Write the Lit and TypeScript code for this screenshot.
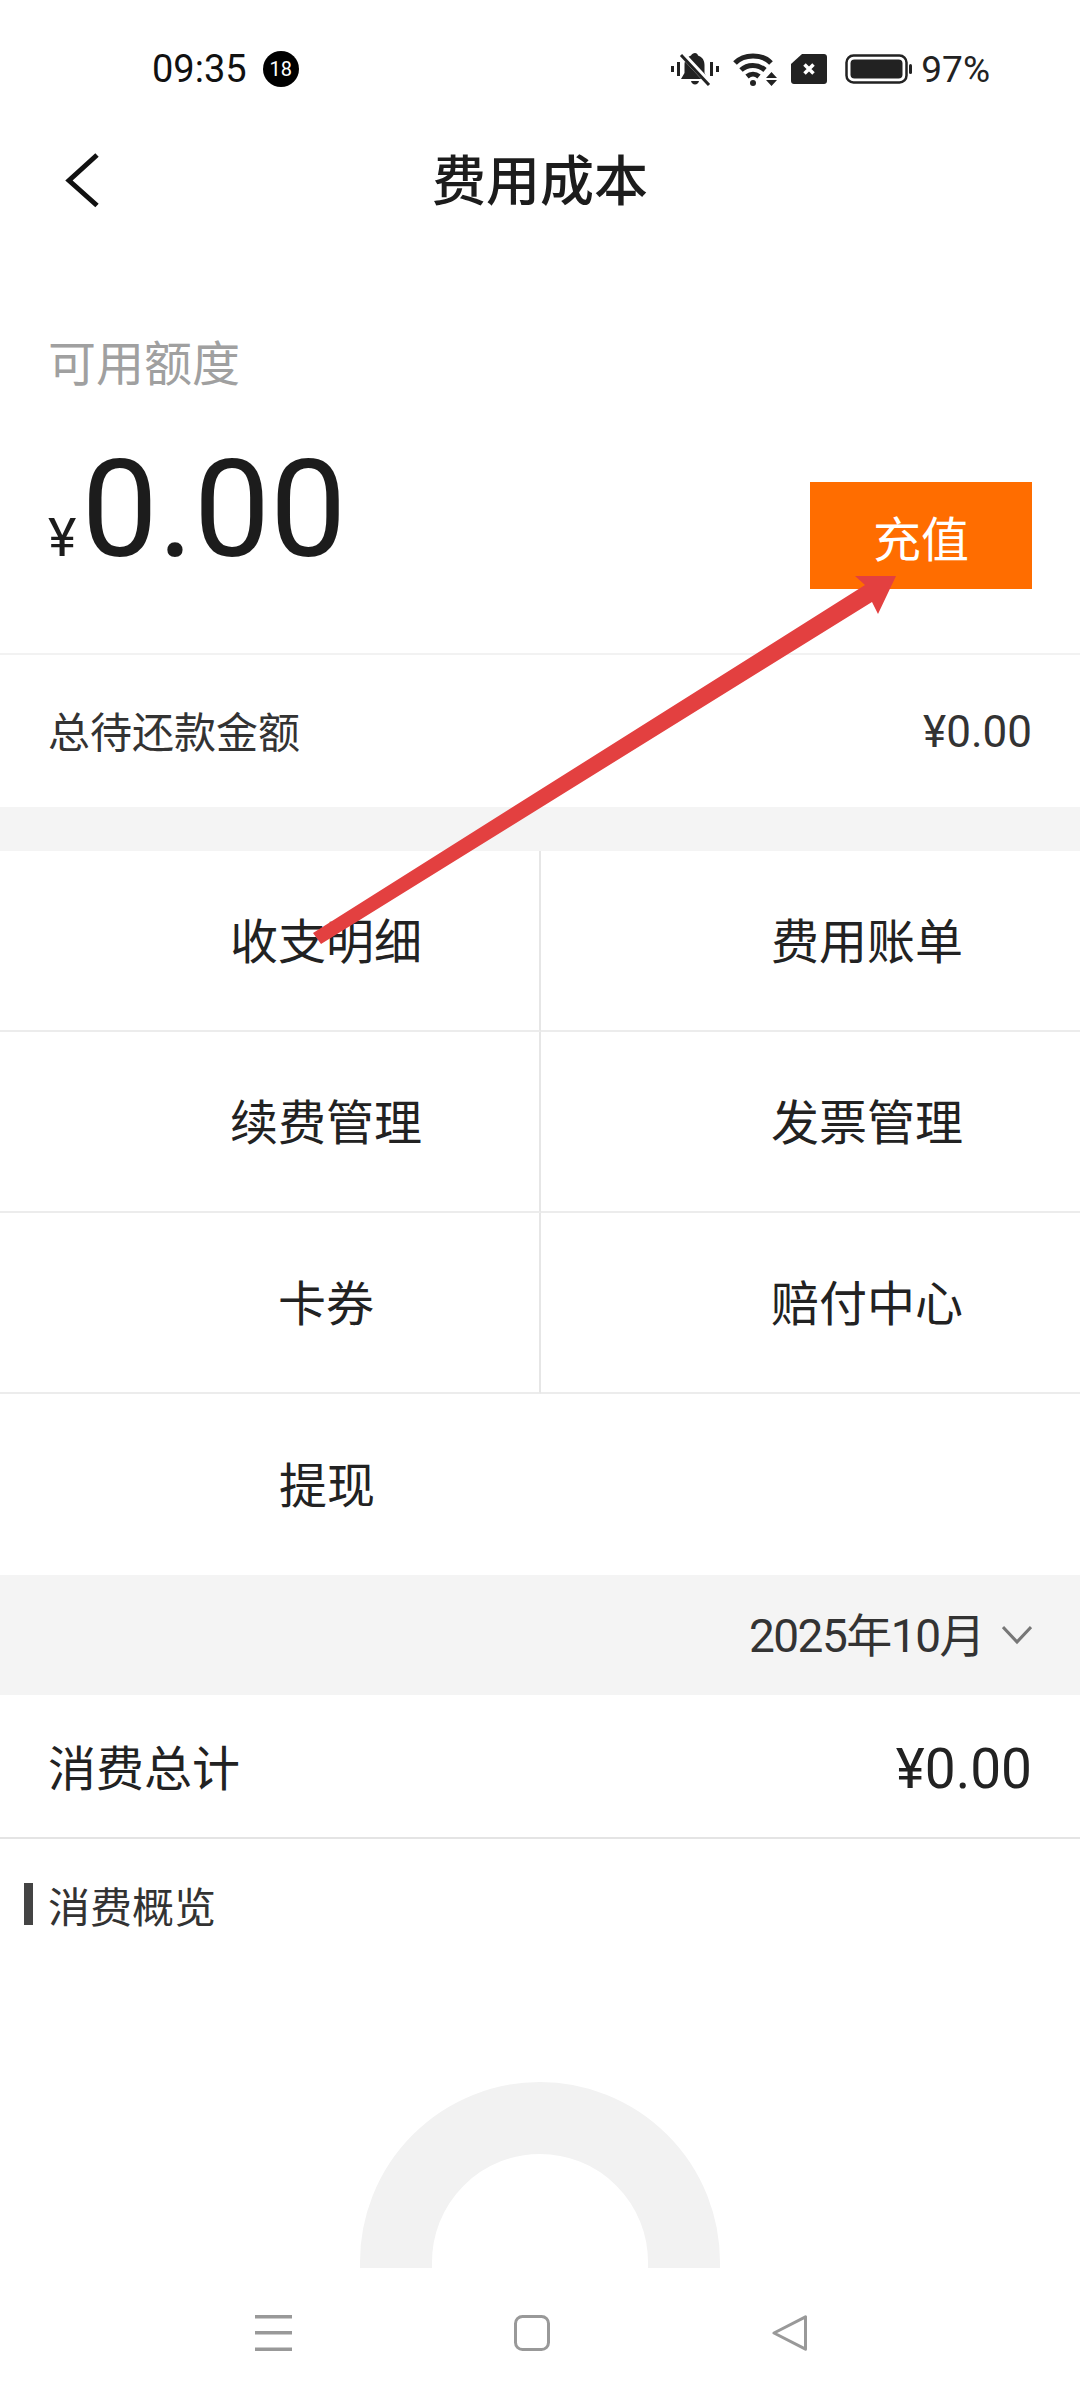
import { LitElement, html, css, svg } from 'lit'
import { customElement } from 'lit/decorators.js'

const MENU = [
  ['收支明细', '费用账单'],
  ['续费管理', '发票管理'],
  ['卡券', '赔付中心'],
  ['提现', ''],
]

@customElement('app-root')
export class AppRoot extends LitElement {
  static styles = css`
    :host {
      display: block;
      position: relative;
      width: 1080px;
      height: 2400px;
      overflow: hidden;
      background: #fff;
      color: #222;
      font-family: 'Roboto', 'Noto Sans CJK SC', sans-serif;
    }

    .status {
      height: 136px;
      display: flex;
      align-items: center;
      padding: 2px 90px 0 152px;
      box-sizing: border-box;
      color: #111;
    }

    .time {
      font-size: 38px;
      line-height: 1;
      margin-right: 16px;
    }

    .badge {
      width: 36px;
      height: 36px;
      border-radius: 50%;
      background: #000;
      color: #fff;
      font-size: 20px;
      display: flex;
      align-items: center;
      justify-content: center;
    }

    .status-icons {
      margin-left: auto;
      display: flex;
      align-items: center;
    }

    .status-icons svg {
      display: block;
    }

    .pct {
      font-size: 37px;
      line-height: 1;
      margin-left: 9px;
      color: #222;
    }

    .nav {
      height: 90px;
      box-sizing: border-box;
      padding-bottom: 8px;
      position: relative;
      display: flex;
      align-items: center;
      justify-content: center;
    }

    .back {
      position: absolute;
      left: 65px;
      top: 16px;
    }

    .title {
      font-size: 54px;
      font-weight: 500;
      color: #1c1c1c;
    }

    .summary {
      height: 429px;
      box-sizing: border-box;
      padding: 109px 48px 0 48px;
      border-bottom: 2px solid #f2f2f2;
    }

    .label {
      font-size: 48px;
      line-height: 60px;
      color: #a0a0a0;
    }

    .balance {
      display: flex;
      justify-content: space-between;
      margin-top: 47px;
    }

    .amount {
      display: flex;
      align-items: baseline;
      line-height: 1;
      color: #1c1c1c;
    }

    .amount .yen {
      font-size: 54px;
      margin-right: 5px;
    }

    .amount .num {
      font-size: 136px;
    }

    .topup {
      width: 222px;
      height: 107px;
      background: #ff6d00;
      color: #fff;
      font-size: 48px;
      display: flex;
      align-items: center;
      justify-content: center;
      margin-top: 40px;
    }

    .row {
      display: flex;
      align-items: center;
      justify-content: space-between;
      padding: 0 48px;
      box-sizing: border-box;
    }

    .debt {
      height: 152px;
      padding-bottom: 4px;
      font-size: 42px;
      color: #333;
    }

    .debt .val {
      font-size: 44px;
      margin-top: 6px;
    }

    .band {
      height: 44px;
      background: #f4f4f4;
    }

    .grid {
      display: grid;
      grid-template-columns: 541px 539px;
      grid-auto-rows: 181px;
    }

    .cell {
      box-sizing: border-box;
      padding: 0 0 5px 113px;
      font-size: 48px;
      color: #222;
      display: flex;
      align-items: center;
      justify-content: center;
      border-bottom: 2px solid #ececec;
    }

    .cell.left {
      border-right: 2px solid #e6e6e6;
    }

    .cell.last {
      border-bottom: none;
      border-right: none;
    }

    .month {
      height: 120px;
      background: #f4f4f4;
      display: flex;
      align-items: center;
      justify-content: flex-end;
      padding: 0 48px 0 0;
      gap: 18px;
      font-size: 46px;
      letter-spacing: -1.5px;
      color: #333;
    }

    .month span {
      margin-bottom: 6px;
    }

    .total {
      height: 144px;
      padding-bottom: 2px;
      font-size: 48px;
      color: #222;
      border-bottom: 2px solid #e4e4e4;
    }

    .total .val {
      font-size: 55px;
      margin-top: 8px;
    }

    .overview {
      height: 429px;
      overflow: hidden;
    }

    .section {
      display: flex;
      align-items: center;
      height: 42px;
      margin-top: 44px;
      padding-left: 24px;
      font-size: 42px;
      color: #333;
    }

    .section::before {
      content: '';
      width: 9px;
      height: 42px;
      background: #444;
      margin-right: 15px;
    }

    .chart {
      display: block;
      margin: 157px 0 0 360px;
    }

    .softkeys {
      height: 133px;
      position: relative;
    }

    .softkeys svg {
      position: absolute;
      top: 47px;
    }

    .arrow {
      position: absolute;
      left: 0;
      top: 0;
      pointer-events: none;
    }
  `

  private _renderCell(label: string, col: number, row: number) {
    const last = row === MENU.length - 1
    const cls = `cell ${col === 0 ? 'left' : ''} ${last ? 'last' : ''}`
    return html`<div class=${cls}>${label}</div>`
  }

  private _renderStatusIcons() {
    return html`
      <svg width="48" height="34" viewBox="0 0 48 34" fill="#222">
        <rect x="0" y="14" width="3" height="6" />
        <rect x="6" y="10" width="3" height="14" />
        <rect x="39" y="10" width="3" height="14" />
        <rect x="45" y="14" width="3" height="6" />
        <path d="M24 1c1.600 0 2.700 1 3 2.600 4.500 1.500 6.500 5 6.500 9.400v8l3 6H10l3.500-6v-8c0-4.400 2-7.900 6.500-9.400C20.800 2 22.400 1 24 1z" />
        <path d="M20 29h8c-.5 2.200-2 3.500-4 3.500s-3.500-1.300-4-3.500z" />
        <path d="M12 3l27 29" stroke="#fff" stroke-width="6" />
        <path d="M10 3l28 30" stroke="#222" stroke-width="3" />
      </svg>
      <svg style="margin-left:14px" width="46" height="34" viewBox="0 0 46 34" fill="none" stroke="#222">
        <path d="M2 11C11 1.500 29 1.500 38 11" stroke-width="5" />
        <path d="M8 18c6.500-6 17-6 24 0" stroke-width="5" />
        <path d="M14 24.500c3.500-3 8.500-3 12 0" stroke-width="5" />
        <circle cx="20" cy="31" r="3" fill="#222" stroke="none" />
        <path d="M33 26h11l-5.500-6zM33 28h11l-5.500 6z" fill="#222" stroke="none" />
      </svg>
      <svg style="margin-left:12px" width="36" height="30" viewBox="0 0 36 30">
        <path d="M11 0h22c1.700 0 3 1.300 3 3v24c0 1.700-1.300 3-3 3H3c-1.700 0-3-1.300-3-3V10z" fill="#222" />
        <path d="M13.500 10.500l9 9M22.500 10.500l-9 9" stroke="#fff" stroke-width="3.500" />
      </svg>
      <svg style="margin-left:18px" width="67" height="30" viewBox="0 0 67 30">
        <rect x="1.500" y="1.500" width="60" height="27" rx="7" fill="none" stroke="#222" stroke-width="2.500" />
        <rect x="5.500" y="5.500" width="52" height="19" rx="4" fill="#222" />
        <rect x="64" y="10" width="3" height="10" rx="1.500" fill="#222" />
      </svg>
    `
  }

  render() {
    return html`
      <div class="status">
        <span class="time">09:35</span>
        <span class="badge">18</span>
        <div class="status-icons">
          ${this._renderStatusIcons()}
          <span class="pct">97%</span>
        </div>
      </div>

      <div class="nav">
        <svg class="back" width="36" height="58" viewBox="0 0 36 58" fill="none" stroke="#111" stroke-width="5">
          <path d="M32 3L4 28.500l28 25" />
        </svg>
        <span class="title">费用成本</span>
      </div>

      <div class="summary">
        <div class="label">可用额度</div>
        <div class="balance">
          <div class="amount"><span class="yen">¥</span><span class="num">0.00</span></div>
          <div class="topup">充值</div>
        </div>
      </div>

      <div class="row debt"><span>总待还款金额</span><span class="val">¥0.00</span></div>
      <div class="band"></div>

      <div class="grid">
        ${MENU.map((row, r) => row.map((label, c) => this._renderCell(label, c, r)))}
      </div>

      <div class="month">
        <span>2025年10月</span>
        <svg width="30" height="20" viewBox="0 0 30 20" fill="none" stroke="#777" stroke-width="3">
          <path d="M1 2l14 15L29 2" />
        </svg>
      </div>

      <div class="row total"><span>消费总计</span><span class="val">¥0.00</span></div>

      <div class="overview">
        <div class="section">消费概览</div>
        <svg class="chart" width="360" height="190" viewBox="0 0 360 190" fill="none">
          <path d="M36 180A144 144 0 0 1 324 180V190M36 180V190" stroke="#f2f2f2" stroke-width="72" />
        </svg>
      </div>

      <div class="softkeys">
        <svg style="left:255px" width="38" height="36" viewBox="0 0 38 36" fill="#999">
          <rect y="0" width="37" height="3.500" />
          <rect y="16" width="37" height="3.500" />
          <rect y="32.500" width="37" height="3.500" />
        </svg>
        <svg style="left:514px" width="36" height="36" viewBox="0 0 36 36" fill="none" stroke="#999" stroke-width="3">
          <rect x="1.500" y="1.500" width="33" height="33" rx="7" />
        </svg>
        <svg style="left:772px" width="36" height="36" viewBox="0 0 36 36" fill="none" stroke="#999" stroke-width="3" stroke-linejoin="round">
          <path d="M2 18L33.500 1.800V34.200z" />
        </svg>
      </div>

      <svg class="arrow" width="1080" height="2400" viewBox="0 0 1080 2400">
        ${svg`<path d="M313 933L321 944L872 602L878 614L896 576H855L865 585z" fill="#e34040" />`}
      </svg>
    `
  }
}

declare global {
  interface HTMLElementTagNameMap {
    'app-root': AppRoot
  }
}
